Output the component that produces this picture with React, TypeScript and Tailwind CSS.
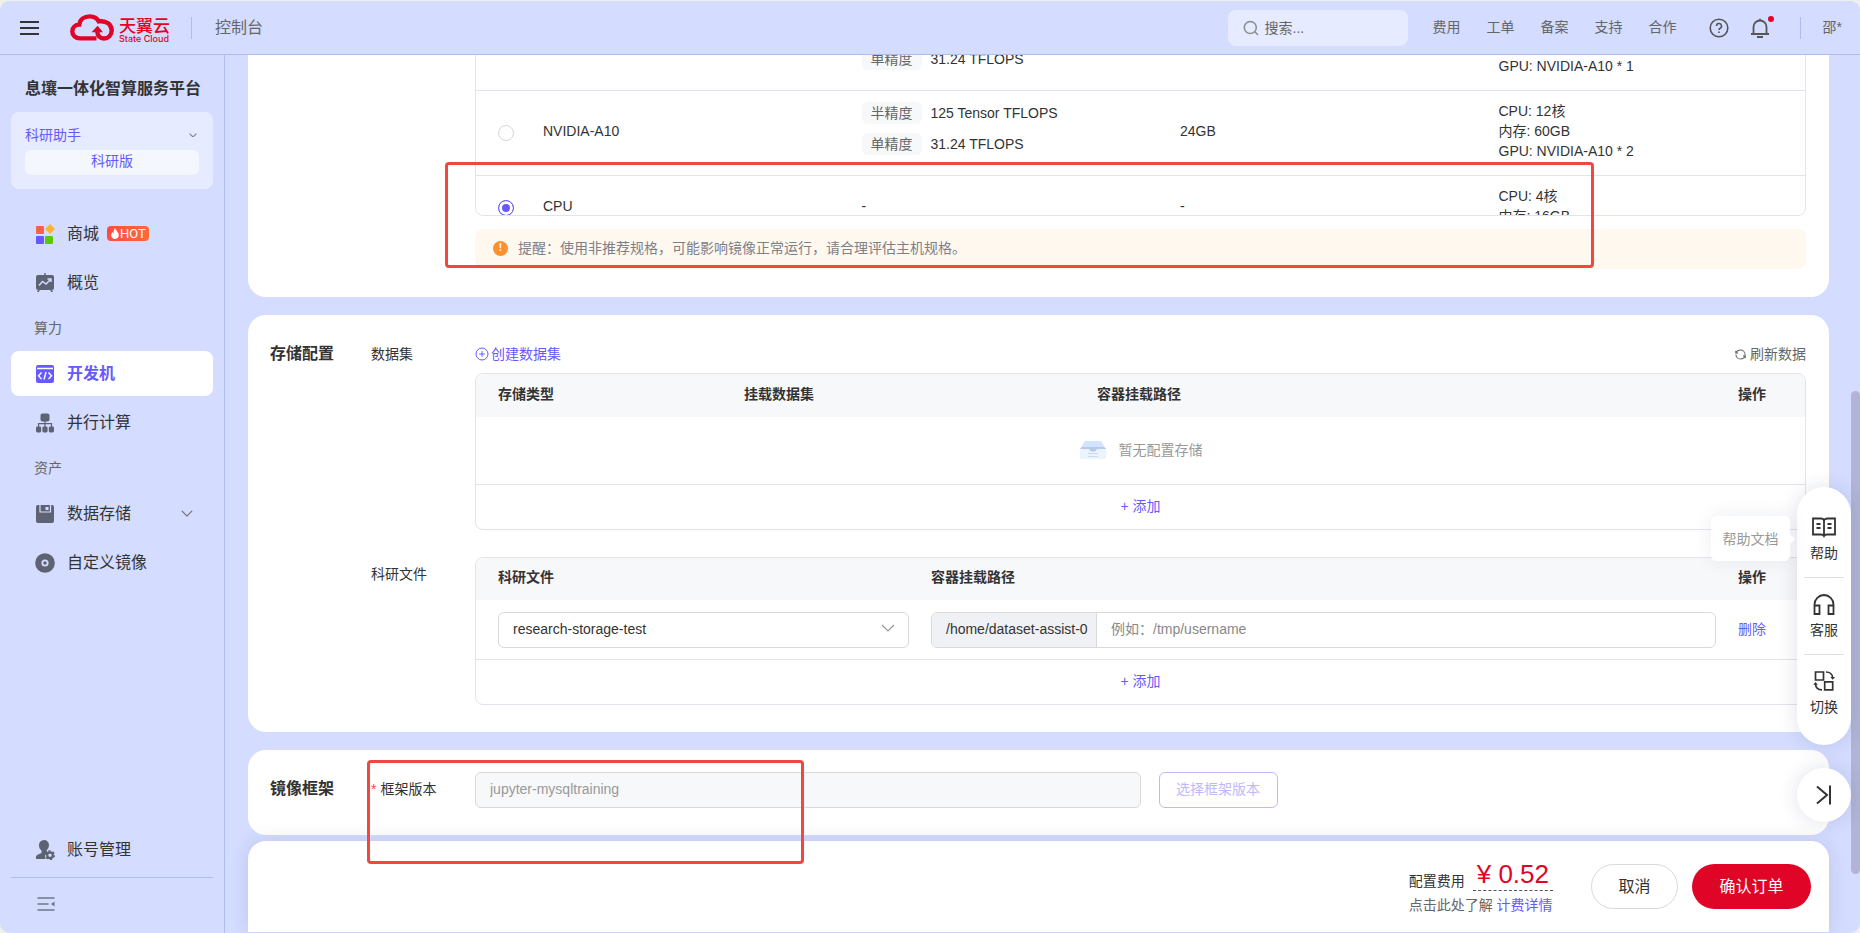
import type { ReactNode } from "react";
import clsx from "clsx";

type Host = {
  name?: string;
  memory?: string;
  precision?: [string, string][];
  specs: string[];
  checked?: boolean;
};

const hosts: Host[] = [
  { precision: [["单精度", "31.24 TFLOPS"]], specs: ["GPU: NVIDIA-A10 * 1"] },
  {
    name: "NVIDIA-A10",
    memory: "24GB",
    precision: [["半精度", "125 Tensor TFLOPS"], ["单精度", "31.24 TFLOPS"]],
    specs: ["CPU: 12核", "内存: 60GB", "GPU: NVIDIA-A10 * 2"],
  },
  { name: "CPU", memory: "-", specs: ["CPU: 4核", "内存: 16GB"], checked: true },
];

const topLinks = ["费用", "工单", "备案", "支持", "合作"];

function Chevron({ className }: { className?: string }) {
  return (
    <svg viewBox="0 0 14 8" fill="none" stroke="currentColor" strokeWidth="1.2" className={className}>
      <path d="M1 1l6 6 6-6" />
    </svg>
  );
}

function Logo() {
  return (
    <a href="#" className="ml-[31px] flex items-center gap-[5px] text-[#e00427]">
      <svg viewBox="0 0 44 27" className="h-[27px] w-11" fill="none" stroke="currentColor" strokeWidth="4.4">
        <path d="M26.5 24.4H10C5.600 24.400 2.300 21.300 2.300 17.400C2.300 13.400 5.400 10.600 9.300 10.500C10 5.500 14.400 2.400 19.600 2.400C23.800 2.400 27.200 4.300 28.800 7.400C36.500 6.200 41.700 10.700 41.700 16.600C41.700 21.200 38.300 24.500 34 24.500C29.800 24.500 27.400 21.500 27.400 18V16.500" />
        <path d="M21.500 18.200L27.600 11.800L33 18.200Z" fill="currentColor" stroke="none" />
      </svg>
      <span className="flex flex-col pt-1.5">
        <span className="text-[17px] font-medium leading-[15px]">天翼云</span>
        <span className="font-[Inter] text-[9px] font-medium leading-[9px]">State Cloud</span>
      </span>
    </a>
  );
}

function Header() {
  return (
    <header className="relative z-10 flex h-[54px] shrink-0 items-center border-b border-[#afbee8] bg-[#d4dcff] pl-5 pr-[18px] text-sm text-[#666]">
      <button aria-label="菜单" className="flex h-4 w-[19px] flex-col justify-between py-px">
        <span className="h-0.5 w-full bg-[#333]" />
        <span className="h-0.5 w-full bg-[#333]" />
        <span className="h-0.5 w-full bg-[#333]" />
      </button>
      <Logo />
      <span className="ml-[21px] h-[22px] w-px bg-[#afbee8]" />
      <span className="ml-[23px] text-base">控制台</span>
      <label className="ml-auto flex h-9 w-[180px] items-center rounded-lg bg-[#e6ebff] pl-[15px]">
        <svg viewBox="0 0 16 16" className="mr-1.5 size-4 text-[#8c8c8c]" fill="none" stroke="currentColor" strokeWidth="1.5">
          <circle cx="7.300" cy="7.500" r="6" />
          <path d="M11.800 11.800L15 15" />
        </svg>
        <input aria-label="搜索" placeholder="搜索..." className="w-28 bg-transparent outline-none placeholder:text-[#666]" />
      </label>
      <nav className="ml-[25px] flex gap-[26px] pb-0.5">
        {topLinks.map((t) => (
          <a key={t} href="#">{t}</a>
        ))}
      </nav>
      <button aria-label="帮助" className="ml-8">
        <svg viewBox="0 0 20 20" className="size-5" fill="none" stroke="#555" strokeWidth="1.600">
          <circle cx="10" cy="10" r="8.800" />
          <path d="M7.500 8a2.500 2.500 0 1 1 3.700 2.200c-.8.400-1.200.8-1.200 1.700" />
          <path d="M10 13.400v1.700" />
        </svg>
      </button>
      <button aria-label="通知" className="relative ml-[21px]">
        <svg viewBox="0 0 20 20" className="size-5" fill="none" stroke="#555" strokeWidth="1.800">
          <path d="M3.500 16V9a6.500 6.500 0 0 1 13 0v7" />
          <path d="M1 16h18M7 19h6M10 .8v2" />
        </svg>
        <span className="absolute -right-1 -top-0.5 size-1.5 rounded-full bg-[#e00427]" />
      </button>
      <span className="ml-[30px] h-[22px] w-px bg-[#afbee8]" />
      <span className="ml-[22px] pb-0.5">邵*</span>
    </header>
  );
}

function NavItem({ icon, active, children }: { icon: ReactNode; active?: boolean; children: ReactNode }) {
  return (
    <a
      href="#"
      className={clsx(
        "flex h-[45px] shrink-0 items-center rounded-lg pl-6 pr-5 text-base",
        active ? "bg-white font-bold text-[#6659ff]" : "text-[#333]"
      )}
    >
      <span className={clsx("mr-3 flex w-5", active ? "text-[#6659ff]" : "text-[#5d6372]")}>{icon}</span>
      {children}
    </a>
  );
}

function Sidebar() {
  return (
    <aside className="flex w-[225px] shrink-0 flex-col border-r border-[#afbee8] px-[11px]">
      <h1 className="mt-[22px] pl-3.5 text-base font-bold leading-6 text-[#333]">息壤一体化智算服务平台</h1>
      <div className="mt-[11px] h-[77px] shrink-0 rounded-lg bg-[#e6ebff] px-3.5 pt-[13px] text-sm text-[#6659ff]">
        <button className="flex w-full items-center justify-between leading-5">
          科研助手
          <Chevron className="mr-0.5 w-2 stroke-2 text-[#888]" />
        </button>
        <button className="mt-[5px] h-[25px] w-full rounded-md bg-[#f4f7fe] pb-1 leading-5">科研版</button>
      </div>
      <nav className="mt-[22px] flex flex-col">
        <NavItem
          icon={
            <svg viewBox="0 0 20 20" className="size-5">
              <rect x="1" y="2" width="8" height="8" rx="1" fill="#ff6047" />
              <path d="M15 0l5 5-5 5-5-5z" fill="#ffb42e" />
              <rect x="1" y="12" width="8" height="8" rx="1" fill="#6659ff" />
              <rect x="10" y="12" width="8" height="8" rx="1" fill="#5ac80a" />
            </svg>
          }
        >
          商城
          <span className="ml-2 flex h-[15px] w-[42px] items-center rounded bg-linear-to-r from-[#ff4a44] to-[#ff6a35] pl-1 font-[Roboto] text-[13px] text-white">
            <svg viewBox="0 0 8 11" className="mr-px h-[11px] w-2" fill="currentColor">
              <path d="M4 0C4.500 2 7.800 4.200 7.800 7.200C7.800 9.600 6 11 4 11S.2 9.600.2 7.300C.2 5.800 1 4.600 1.700 4C1.800 4.800 2.100 5.200 2.600 5.300C2.400 3 3 1.200 4 0z" />
            </svg>
            HOT
          </span>
        </NavItem>
        <div className="h-1" />
        <NavItem
          icon={
            <svg viewBox="0 0 20 20" className="size-5">
              <path d="M9.300 0h1.400v2h6.300a2 2 0 0 1 2 2v11a2 2 0 0 1-2 2l1 2h-1.800l-1-2H4.800l-1 2H2l1-2a2 2 0 0 1-2-2V4a2 2 0 0 1 2-2h6.300z" fill="currentColor" />
              <path d="M4 12.500l3.500-4 3.500 2.500 5-5M12.500 6H16v3" fill="none" stroke="#d4dcff" strokeWidth="1.400" />
            </svg>
          }
        >
          概览
        </NavItem>
        <div className="flex h-[46px] items-center pl-[23px] text-sm text-[#666]">算力</div>
        <NavItem
          active
          icon={
            <svg viewBox="0 0 20 20" className="size-5">
              <rect x="1" y="1" width="18" height="18" rx="2" fill="currentColor" />
              <path d="M2 4.500h16M6.500 8.500l-3 3.300 3 3.300M13.500 8.500l3 3.300-3 3.300M11 8l-2 7.500" fill="none" stroke="#fff" strokeWidth="1.400" />
            </svg>
          }
        >
          开发机
        </NavItem>
        <div className="h-1" />
        <NavItem
          icon={
            <svg viewBox="0 0 20 20" className="size-5" fill="currentColor">
              <rect x="5.500" y="0.500" width="9" height="8" rx="2" />
              <path d="M10 8v6M3.500 14v-3.300h13V14" fill="none" stroke="currentColor" strokeWidth="1.200" />
              <rect x="1" y="13.500" width="5.200" height="6" rx="1.400" />
              <rect x="7.400" y="13.500" width="5.200" height="6" rx="1.400" />
              <rect x="13.800" y="13.500" width="5.200" height="6" rx="1.400" />
            </svg>
          }
        >
          并行计算
        </NavItem>
        <div className="flex h-[46px] items-center pl-[23px] text-sm text-[#666]">资产</div>
        <NavItem
          icon={
            <svg viewBox="0 0 20 20" className="size-5">
              <rect x="1" y="1" width="18" height="18" rx="2" fill="currentColor" />
              <path d="M5 1v7h10.500V1" fill="none" stroke="#d4dcff" strokeWidth="1.200" />
              <rect x="10.500" y="3" width="3" height="3" fill="#d4dcff" />
            </svg>
          }
        >
          数据存储
          <Chevron className="ml-auto w-3 text-[#666]" />
        </NavItem>
        <div className="h-1" />
        <NavItem
          icon={
            <svg viewBox="0 0 20 20" className="size-5">
              <circle cx="10" cy="10" r="9.800" fill="currentColor" />
              <circle cx="10" cy="10" r="2.700" fill="currentColor" stroke="#d4dcff" strokeWidth="1.800" />
            </svg>
          }
        >
          自定义镜像
        </NavItem>
      </nav>
      <div className="mt-auto border-b border-[#afbee8] pb-[5px]">
        <NavItem
          icon={
            <svg viewBox="0 0 20 20" className="size-5" fill="currentColor">
              <path d="M9 0a5 5 0 0 1 5 5c0 2.200-1 4-2.500 5.200l1 1.800L10 15.500l.5 3.500H1v-2c0-2 3-3 5.500-4v-2.500C5 9.500 4 7.500 4 5.200A5 5 0 0 1 9 0z" />
              <circle cx="15" cy="15.200" r="2.800" fill="none" stroke="currentColor" strokeWidth="2.200" />
              <circle cx="15" cy="15.200" r="4.200" fill="none" stroke="currentColor" strokeWidth="1.600" strokeDasharray="2.200 2.200" />
            </svg>
          }
        >
          账号管理
        </NavItem>
      </div>
      <button aria-label="收起" className="flex h-[55px] items-center pl-[26px] pb-1 text-[#6d7588]">
        <svg viewBox="0 0 18 14" className="h-3.5 w-[18px]" fill="none" stroke="currentColor" strokeWidth="1.500">
          <path d="M.5 1h17M.5 7h11M.5 13h17" />
          <path d="M17.500 4.500v5L14 7z" fill="currentColor" stroke="none" />
        </svg>
      </button>
    </aside>
  );
}

function HostCard() {
  return (
    <section className="relative shrink-0 rounded-[18px] bg-white pb-7 pl-[227px] pr-[23px]">
      <div className="h-[212px] overflow-hidden rounded-lg border border-[#e2e3ee]">
        <table className="w-full table-fixed text-sm leading-5 text-[#333]">
          <colgroup>
            <col className="w-[55px]" />
            <col />
            <col />
            <col />
            <col />
          </colgroup>
          <tbody>
            {hosts.map((h, i) => (
              <tr key={i} className={clsx("border-b border-[#e2e3ee]", h.precision && "h-[85px]")}>
                <td className="pb-1 pl-[22px]">
                  <input
                    type="radio"
                    name="host"
                    aria-label={h.name ?? h.specs[0]}
                    defaultChecked={h.checked}
                    className="mt-1 block size-4 appearance-none rounded-full border border-[#d5d5d9] bg-white checked:border-[#6659ff] checked:bg-[#6659ff] checked:shadow-[inset_0_0_0_3px_white]"
                  />
                </td>
                <td className="px-3 pb-1">{h.name}</td>
                <td className={clsx("px-3", h.precision ? "pb-5 align-bottom" : "pb-1")}>
                  {h.precision ? (
                    <div className="flex flex-col gap-[9px]">
                      {h.precision.map(([label, value]) => (
                        <div key={label} className="flex items-center gap-[9px]">
                          <span className="w-[60px] rounded-md bg-[#f7f8fa] text-center leading-[22px] text-[#666]">{label}</span>
                          {value}
                        </div>
                      ))}
                    </div>
                  ) : (
                    "-"
                  )}
                </td>
                <td className="px-3 pb-1">{h.memory}</td>
                <td className="px-3 pb-3.5 pt-2.5 align-bottom">
                  {h.specs.map((s) => (
                    <div key={s}>{s}</div>
                  ))}
                </td>
              </tr>
            ))}
          </tbody>
        </table>
      </div>
      <div className="mt-[13px] flex h-10 items-center rounded-lg bg-[#fff8ef] pl-[18px] pb-0.5 text-sm text-[#7d8089]">
        <span className="mr-2.5 flex size-[15px] items-center justify-center rounded-full bg-[#ff9030] text-[10px] font-bold text-white">!</span>
        提醒：使用非推荐规格，可能影响镜像正常运行，请合理评估主机规格。
      </div>
      <div className="pointer-events-none absolute bottom-[29px] left-[197px] right-[235px] h-[106px] rounded border-3 border-[#f0483e]" />
    </section>
  );
}

function AddRow() {
  return (
    <button className="block h-[45px] w-full border-t border-[#e2e3ee] pb-0.5 text-sm text-[#6659ff]">+ 添加</button>
  );
}

function StorageCard() {
  return (
    <section className="flex shrink-0 rounded-[18px] bg-white pb-[27px] pl-[22px] pr-[23px] pt-7 text-sm text-[#333]">
      <h2 className="w-[101px] shrink-0 text-base font-bold leading-[22px]">存储配置</h2>
      <div className="min-w-0 flex-1">
        <div className="flex">
          <div className="w-[104px] shrink-0 leading-[22px]">数据集</div>
          <div className="min-w-0 flex-1">
            <div className="flex items-center justify-between leading-[22px]">
              <a href="#" className="flex items-center gap-0.5 text-[#6659ff]">
                <svg viewBox="0 0 14 14" className="size-3.5" fill="none" stroke="currentColor">
                  <circle cx="7" cy="7" r="6" />
                  <path d="M7 4.200v5.600M4.200 7h5.600" />
                </svg>
                创建数据集
              </a>
              <button className="flex items-center gap-1 text-[#666]">
                <svg viewBox="0 0 12 12" className="size-[11px]" fill="none" stroke="currentColor" strokeWidth="1.100">
                  <path d="M1.200 4.200C2 2 4 1 6 1c2.800 0 5 2.200 5 5 0 .7-.1 1.200-.3 1.700M.8 1.800v2.600h2.600" />
                  <path d="M10.800 7.800C10 10 8 11 6 11c-2.800 0-5-2.200-5-5M11.200 10.200V7.600H8.600" />
                </svg>
                刷新数据
              </button>
            </div>
            <div className="mt-2 overflow-hidden rounded-lg border border-[#e2e3ee]">
              <table className="w-full table-fixed">
                <thead>
                  <tr className="h-[43px] bg-[#f7f8fa] text-left">
                    <th className="w-[246px] pb-1 pl-[22px]">存储类型</th>
                    <th className="w-[353px] pb-1 pl-[22px]">挂载数据集</th>
                    <th className="pb-1 pl-[22px]">容器挂载路径</th>
                    <th className="w-[89px] pb-1 pl-[22px]">操作</th>
                  </tr>
                </thead>
                <tbody>
                  <tr className="h-[67px]">
                    <td colSpan={4} className="pb-0.5">
                      <div className="flex items-center justify-center gap-3 text-[#999]">
                        <svg viewBox="0 0 28 20" className="h-5 w-7">
                          <path d="M6 1h16l5 8H1z" fill="#d3e4ff" />
                          <path d="M1 9h9l2 2h4l2-2h9v10H1z" fill="#ebf3ff" />
                          <path d="M1 9l2-2h22l2 2h-9c-.5 2-2 2.600-4 2.600S10.500 11 10 9z" fill="#b9c9e8" />
                          <path d="M9 13.500h10M9 16.500h10" stroke="#ccd9f0" strokeWidth="1.200" />
                        </svg>
                        暂无配置存储
                      </div>
                    </td>
                  </tr>
                </tbody>
              </table>
              <AddRow />
            </div>
          </div>
        </div>
        <div className="mt-[27px] flex">
          <div className="w-[104px] shrink-0 pt-1.5 leading-[22px]">科研文件</div>
          <div className="min-w-0 flex-1 overflow-hidden rounded-lg border border-[#e2e3ee]">
            <table className="w-full table-fixed">
              <thead>
                <tr className="h-[42px] bg-[#f7f8fa] text-left">
                  <th className="w-[433px] pb-1 pl-[22px]">科研文件</th>
                  <th className="pb-1 pl-[22px]">容器挂载路径</th>
                  <th className="w-[89px] pb-1 pl-[22px]">操作</th>
                </tr>
              </thead>
              <tbody>
                <tr className="h-[59px]">
                  <td className="pl-[22px]">
                    <div className="relative">
                      <select aria-label="科研文件" className="h-9 w-full appearance-none rounded-md border border-[#d9d9d9] bg-white pb-0.5 pl-3.5">
                        <option>research-storage-test</option>
                      </select>
                      <Chevron className="pointer-events-none absolute right-3.5 top-3 w-3.5 text-[#999]" />
                    </div>
                  </td>
                  <td className="pl-[22px]">
                    <label className="flex h-9 items-center overflow-hidden rounded-md border border-[#d9d9d9]">
                      <span className="flex h-full w-[165px] shrink-0 items-center border-r border-[#d9d9d9] bg-[#f0f1f5] pb-0.5 pl-3.5">/home/dataset-assist-0</span>
                      <input placeholder="例如：/tmp/username" className="h-full min-w-0 flex-1 pb-0.5 pl-3.5 outline-none placeholder:text-[#888]" />
                    </label>
                  </td>
                  <td className="pb-0.5 pl-[22px]">
                    <button className="text-[#6659ff]">删除</button>
                  </td>
                </tr>
              </tbody>
            </table>
            <AddRow />
          </div>
        </div>
      </div>
    </section>
  );
}

function FrameworkCard() {
  return (
    <section className="relative flex h-[85px] shrink-0 rounded-[18px] bg-white pl-[22px] pr-[23px] pt-[22px] text-sm text-[#333]">
      <h2 className="w-[101px] shrink-0 text-base font-bold leading-[34px]">镜像框架</h2>
      <label htmlFor="framework" className="flex w-[104px] shrink-0 gap-1 leading-[34px]">
        <span className="text-[#f5483f]">*</span>框架版本
      </label>
      <div className="flex min-w-0 flex-1 gap-[18px]">
        <input
          id="framework"
          disabled
          defaultValue="jupyter-mysqltraining"
          className="h-9 w-1/2 rounded-md border border-[#d9d9d9] bg-[#f7f8fa] pb-0.5 pl-3.5 text-[#999]"
        />
        <button disabled className="h-9 w-[119px] shrink-0 rounded-md border border-[#beb9ff] pb-0.5 text-[#beb9ff]">选择框架版本</button>
      </div>
      <div className="pointer-events-none absolute left-[119px] top-2.5 z-20 h-[104px] w-[437px] rounded border-3 border-[#f0483e]" />
    </section>
  );
}

function OrderBar() {
  return (
    <footer className="relative z-10 mb-px mt-1.5 flex h-[91px] shrink-0 items-center justify-end rounded-t-[18px] bg-white pr-[18px] shadow-[0_0_20px_rgba(30,40,90,0.12)]">
      <div className="mr-[38px] text-sm text-[#333]">
        <div className="flex items-end gap-2">
          <span className="leading-5">配置费用</span>
          <span className="border-b border-dashed border-[#555] px-1 text-[26px] leading-8 text-[#e00427]">¥ 0.52</span>
        </div>
        <div className="pt-1 leading-5 text-[#666]">
          点击此处了解 <a href="#" className="text-[#6659ff]">计费详情</a>
        </div>
      </div>
      <button className="h-[45px] w-[87px] rounded-full border border-[#d9d9d9] text-base text-[#333]">取消</button>
      <button className="ml-3.5 h-[45px] w-[119px] rounded-full bg-[#e00427] text-base text-white">确认订单</button>
    </footer>
  );
}

function HelpItem({ label, children }: { label: string; children: ReactNode }) {
  return (
    <button className="flex h-[77px] w-10 flex-col items-center gap-1 pt-2 text-sm text-[#333]">
      <svg viewBox="0 0 24 24" className="mt-1.5 size-6" fill="none" stroke="currentColor" strokeWidth="1.800">
        {children}
      </svg>
      {label}
    </button>
  );
}

function FloatingHelp() {
  return (
    <div className="absolute bottom-[111px] right-[9px] z-20 flex flex-col items-end gap-[23px]">
      <div className="absolute right-[61px] top-[29px] flex h-[45px] w-[79px] items-center justify-center rounded-md bg-white/95 text-sm text-[#999] shadow-[0_0_20px_rgba(30,40,90,0.08)]">
        帮助文档
        <span className="absolute -right-[5px] border-y-[5px] border-l-[5px] border-y-transparent border-l-white" />
      </div>
      <div className="flex h-[258px] w-[54px] flex-col items-center divide-y divide-[#dedfe9] rounded-full bg-white pt-3.5 shadow-[0_0_20px_rgba(30,40,90,0.14)]">
        <HelpItem label="帮助">
          <path d="M1 3.500h7.500c2 0 3.500 1 3.500 2.200 0-1.200 1.500-2.200 3.500-2.200H23v16h-8c-1.500 0-2.500.5-3 1.500-.5-1-1.500-1.500-3-1.500H1zM12 5.500V20M4.500 9h4M4.500 13h4M15.500 9h4M15.500 13h4" />
        </HelpItem>
        <HelpItem label="客服">
          <path d="M2.500 22v-9.500a9.500 9.500 0 0 1 19 0V22M2.500 13.500h5V22h-5zM16.500 13.500h5V22h-5z" />
        </HelpItem>
        <HelpItem label="切换">
          <path d="M3.500 3h8v8h-8zM12.700 12.800h8v8h-8zM14 3c3.800 0 6.500 2.400 6.700 5.800M10 20.800c-3.800 0-6.300-2.400-6.500-5.800" strokeWidth="1.700" />
          <path d="M18.400 8h4.600l-2.300 2.800zM1.200 15.800h4.600L3.500 13z" fill="currentColor" stroke="none" />
        </HelpItem>
      </div>
      <button aria-label="收起侧栏" className="flex size-[54px] items-center justify-center rounded-full bg-white text-[#333] shadow-[0_0_20px_rgba(30,40,90,0.14)]">
        <svg viewBox="0 0 18 20" className="h-5 w-[18px]" fill="none" stroke="currentColor" strokeWidth="2">
          <path d="M2 1.500L12 10 2 18.500M15 .5v19" />
        </svg>
      </button>
    </div>
  );
}

export default function App() {
  return (
    <div className="h-screen bg-[#efefec] pt-px font-['Liberation_Sans','Noto_Sans_CJK_SC',sans-serif]">
      <div className="relative flex h-full flex-col overflow-hidden rounded-[10px] bg-[#d4dcff]">
        <Header />
        <div className="flex min-h-0 flex-1">
          <Sidebar />
          <main className="flex min-w-0 flex-1 flex-col justify-end overflow-hidden pl-[23px] pr-[31px]">
            <div className="flex shrink-0 flex-col gap-[18px]">
              <HostCard />
              <StorageCard />
              <FrameworkCard />
            </div>
            <OrderBar />
          </main>
        </div>
        <FloatingHelp />
        <div className="absolute right-0 top-[390px] h-[483px] w-[9px] rounded-full bg-[#b1b4d6]" />
      </div>
    </div>
  );
}
